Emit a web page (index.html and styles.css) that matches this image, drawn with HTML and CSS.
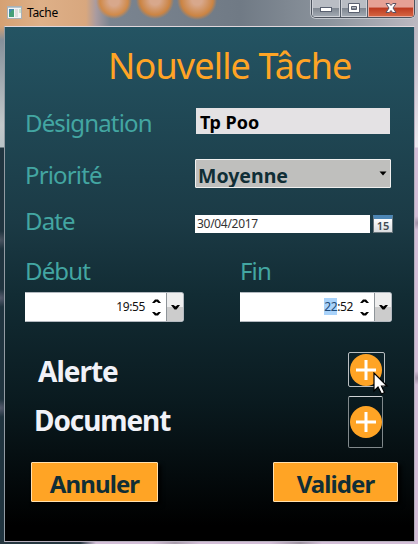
FILE: index.html
```html
<!DOCTYPE html>
<html lang="fr">
<head>
<meta charset="utf-8">
<title>Tache</title>
<link rel="stylesheet" href="styles.css">
</head>
<body>
<div class="window">
  <header class="titlebar">
    <svg class="app-icon" width="16" height="14" viewBox="0 0 16 14"><rect x=".5" y=".5" width="14" height="12" fill="#f3f5f5" stroke="#a9b1b6"/><path d="M1 1.5h13" stroke="#b7c6ce"/><rect x="2" y="3" width="5" height="8" fill="#438ab0"/><path d="M2 11V8l3-4h2v7z" fill="#45a078"/><rect x="8" y="3" width="3" height="8" fill="#dedfdf"/><rect x="12" y="3" width="2" height="4" fill="#c9e3cf"/></svg>
    <span class="window-name">Tache</span>
    <div class="controls">
      <span class="control"><svg width="12" height="12" viewBox="0 0 12 12"><rect x=".5" y="5.5" width="11" height="4" fill="#fff" stroke="#596070"/></svg></span>
      <span class="control max"><svg width="12" height="12" viewBox="0 0 12 12"><path fill-rule="evenodd" d="M.5 1.500h11v9H.5zM3.500 4.500v3h5v-3z" fill="#fff" stroke="#596070"/></svg></span>
      <span class="control close"><svg width="14" height="12" viewBox="0 0 14 12"><path d="M2 1.500h3.300L7 3.500l1.700-2H12L9 6l3 4.500H8.700L7 8.500l-1.700 2H2L5 6z" fill="#fff" stroke="#5c5262"/></svg></span>
    </div>
  </header>
  <main class="form">
    <h1 class="heading">Nouvelle Tâche</h1>
    <div class="row designation"><label class="label l-designation">Désignation</label><div class="text-field">Tp Poo</div></div>
    <div class="row priority"><label class="label l-priority">Priorité</label><div class="select"><span>Moyenne</span><svg width="8" height="5" viewBox="0 0 8 5"><path d="M.5.500h7L4 4.500z"/></svg></div></div>
    <div class="row date"><label class="label l-date">Date</label><div class="date-field">30/04/2017</div>
      <div class="calendar"><span>15</span></div></div>
    <div class="times">
      <div class="time start"><label class="label l-start">Début</label>
        <div class="spinner"><span class="value">19:55</span><svg class="arrows" width="9" height="18" viewBox="0 0 9 18"><path d="M0 5l3-3.500h3L9 5H6.500l-2-1.500L2.500 5zM0 14h2.500l2 1.500 2-1.500H9l-3 3.500H3z"/></svg><span class="drop"><svg width="9" height="5" viewBox="0 0 9 5"><path d="M0 0h2.500l2 1.500 2-1.500H9L5.500 4.500h-2z"/></svg></span></div></div>
      <div class="time end"><label class="label l-end">Fin</label>
        <div class="spinner"><span class="value"><mark>22</mark>:52</span><svg class="arrows" width="9" height="18" viewBox="0 0 9 18"><path d="M0 5l3-3.500h3L9 5H6.500l-2-1.500L2.500 5zM0 14h2.500l2 1.500 2-1.500H9l-3 3.500H3z"/></svg><span class="drop"><svg width="9" height="5" viewBox="0 0 9 5"><path d="M0 0h2.500l2 1.500 2-1.500H9L5.500 4.500h-2z"/></svg></span></div></div>
    </div>
    <div class="extra alert"><span class="extra-name">Alerte</span><div class="add"><svg width="32" height="32" viewBox="0 0 32 32"><circle cx="16" cy="16" r="16" fill="#ffa425"/><path d="M16 6v20M6 16h20" stroke="#fff" stroke-width="3"/></svg>
      <svg class="pointer" width="16" height="23" viewBox="0 0 16 23"><path d="M1 1v18l4-4 3.500 7 3-1.500L8.500 14H14z" fill="#fff" stroke="#000" stroke-width="1.200"/></svg></div></div>
    <div class="extra document"><span class="extra-name">Document</span><div class="add"><svg width="32" height="32" viewBox="0 0 32 32"><circle cx="16" cy="16" r="16" fill="#ffa425"/><path d="M16 6v20M6 16h20" stroke="#fff" stroke-width="3"/></svg></div></div>
    <div class="actions"><div class="button cancel">Annuler</div><div class="button ok">Valider</div></div>
  </main>
</div>
</body>
</html>
```
FILE: styles.css
```css
* { box-sizing: border-box; }
body { margin: 0; font-family: "Noto Sans", "Open Sans", sans-serif; }
svg { display: block; flex: none; }
.window {
  width: 418px; height: 544px; padding: 0 3px 2px 4px; overflow: hidden;
  display: flex; flex-direction: column;
  background:
    radial-gradient(ellipse 12px 9px at 0 240px, #4b5562, transparent),
    radial-gradient(ellipse 12px 9px at 0 298px, #555b6d, transparent),
    radial-gradient(ellipse 12px 9px at 0 408px, #555b6d, transparent),
    radial-gradient(ellipse 7px 7px at 418px 223px, #9f8fa4, transparent),
    radial-gradient(ellipse 7px 7px at 418px 378px, #9f8fa4, transparent),
    linear-gradient(#85909a00 26px, #85909a 40px, #c3c8ca 125px, #b9c3c7 147px, #20343f 148px) 0 0 / 5px 540px no-repeat,
    linear-gradient(#b5b3bc00 20px, #c8c0cd 60px, #eee9f0 147px, #d4bfd8 148px) 413px 0 / 5px 544px no-repeat,
    linear-gradient(90deg, #263740 80px, #d4bfd8 96px, #d4bfd8 152px, #a99dac 175px, #d4bfd8 200px, #d4bfd8 270px, #9f94a2 300px, #d4bfd8 322px) 0 540px / 418px 4px no-repeat,
    radial-gradient(circle at 114px 1px, #d8a88c 5px, #d08a4a 14px, transparent 18px),
    radial-gradient(circle at 155px 0, #d8a88c 5px, #cb8443 15px, transparent 19px),
    radial-gradient(circle at 197px 0, #d8a88c 5px, #cb8443 16px, transparent 20px),
    linear-gradient(90deg, #d5a173, #deb088 40px, #d8a77e 86px, #a99ba0 96px, #7a8490 110px, #707a85 240px, #8c949d 330px, #bcb9c1 418px);
}
.titlebar { height: 26px; flex: none; display: flex; align-items: flex-start; padding-left: 3px; }
.app-icon { margin-top: 6px; }
.window-name { margin: 4px 0 0 4px; font-size: 12px; line-height: 18px; letter-spacing: -.3px; color: #000; }
.controls {
  display: flex; width: 104px; height: 19px; margin: -1px 0 0 auto;
  border: 1px solid #4c535e; border-top: 0; border-radius: 0 0 5px 5px; overflow: hidden;
  box-shadow: 0 0 0 1px #c3c7cd;
}
.control {
  width: 29px; display: flex; align-items: center; justify-content: center;
  border-right: 1px solid #555d69; box-shadow: inset 0 0 0 1px #cfd2d8;
  background: linear-gradient(#b9bdc4 0 48%, #7f8791 50%, #a4abb4);
}
.control.max { width: 27px; }
.control.close { flex: 1; border: 0; background: linear-gradient(#e6a195 0 45%, #bd3a20 50%, #d76844); box-shadow: inset 0 0 0 1px #e9a99d; }
.close svg { margin-right: 1px; }
.form {
  height: 516px; width: 411px; flex: none; display: flex; flex-direction: column;
  border: 1px solid #b5aebc; border-left-color: #929ba3; border-top-color: #e0d7dc;
  background: linear-gradient(#245463, #1b3a45 38%, #122c34 52%, #0a1a1f 73%, #000 97%);
}
.heading { margin: 14px 0 0 103px; height: 49px; line-height: 49px; font-size: 36px; font-weight: 400; letter-spacing: -.85px; white-space: nowrap; color: #ffa425; }
.row { display: flex; padding-left: 20px; }
.label { width: 170px; font-size: 24px; line-height: 32px; color: #43a6a2; white-space: nowrap; letter-spacing: -.85px; }
.designation { margin-top: 18px; height: 26px; }
.designation .label { margin-top: -1px; }
.text-field { margin-left: 1px; width: 194px; height: 26px; padding-left: 4px; background: #e4e2e4; color: #000; font-size: 18px; font-weight: 700; line-height: 29px; letter-spacing: 0; }
.priority { margin-top: 25px; height: 29px; }
.select { width: 196px; height: 29px; padding: 0 3px 0 2px; display: flex; align-items: center; justify-content: space-between; border: 1px solid #f0f0ef; border-radius: 1px; background: #bfbfbd; color: #102e36; font-size: 19.500px; font-weight: 700; line-height: 33px; overflow: hidden; }
.select span { margin-top: 3px; }
.date { margin-top: 27px; height: 18px; }
.date .label { margin-top: -10px; }
.date-field { width: 175px; height: 18px; padding-left: 2px; background: #fff; color: #333; font-size: 12px; line-height: 18px; letter-spacing: -.3px; }
.calendar { width: 20px; height: 18px; margin-left: 3px; border: 1px solid #68757b; border-top: 4px solid #4c86b5; background: linear-gradient(#fff, #d9dcdf); text-align: center; color: #414b52; font-size: 11px; line-height: 14px; font-weight: 600; }
.calendar span { display: block; }
.times { display: flex; margin-top: 22px; padding-left: 20px; gap: 56px; height: 67px; }
.time { display: flex; flex-direction: column; width: 159px; }
.time.end { width: 152px; }
.time .label { height: 37px; width: auto; }
.spinner { height: 30px; display: flex; align-items: center; justify-content: flex-end; border: 1px solid #b3b9c0; border-left-color: #fff; border-radius: 0 3px 3px 0; background: #fff; overflow: hidden; }
.value { font-size: 12px; line-height: 16px; color: #111; letter-spacing: -.4px; }
.value mark { background: #a9d3fb; color: #1d4a78; }
.arrows { margin: 0 5px 0 7px; }
.drop { width: 17px; height: 28px; display: flex; align-items: center; justify-content: center; border-left: 1px solid #8e9499; background: linear-gradient(#eee 50%, #ccc 50%); }
.extra { display: flex; justify-content: space-between; color: #f1f2f8; font-size: 28px; font-weight: 700; line-height: 38px; letter-spacing: -1px; }
.alert { margin-top: 30px; padding: 0 28px 0 33px; height: 35px; }
.document { margin-top: 9px; padding: 0 31px 0 29px; height: 52px; }
.document .extra-name { margin-top: 5px; letter-spacing: -1.100px; }
.add { position: relative; width: 35px; display: flex; align-items: center; padding-left: 1px; border: 1px solid #81898c; border-top-color: #d0d3d5; border-radius: 2px; }
.alert .add { width: 37px; margin-right: 1px; border-color: #b9bec1; }
.pointer { position: absolute; left: 24px; top: 19px; }
.actions { display: flex; gap: 115px; margin-top: 14px; padding-left: 26px; }
.button { width: 127px; height: 40px; border: 1px solid #ffe0ae; border-radius: 1px; background: #ffa425; color: #102e36; font-size: 24px; font-weight: 700; line-height: 41px; letter-spacing: -.9px; text-align: center; box-shadow: 3px 3px 4px #000; }
.button.ok { width: 125px; }
.l-priority { margin-top: 0; }
```
